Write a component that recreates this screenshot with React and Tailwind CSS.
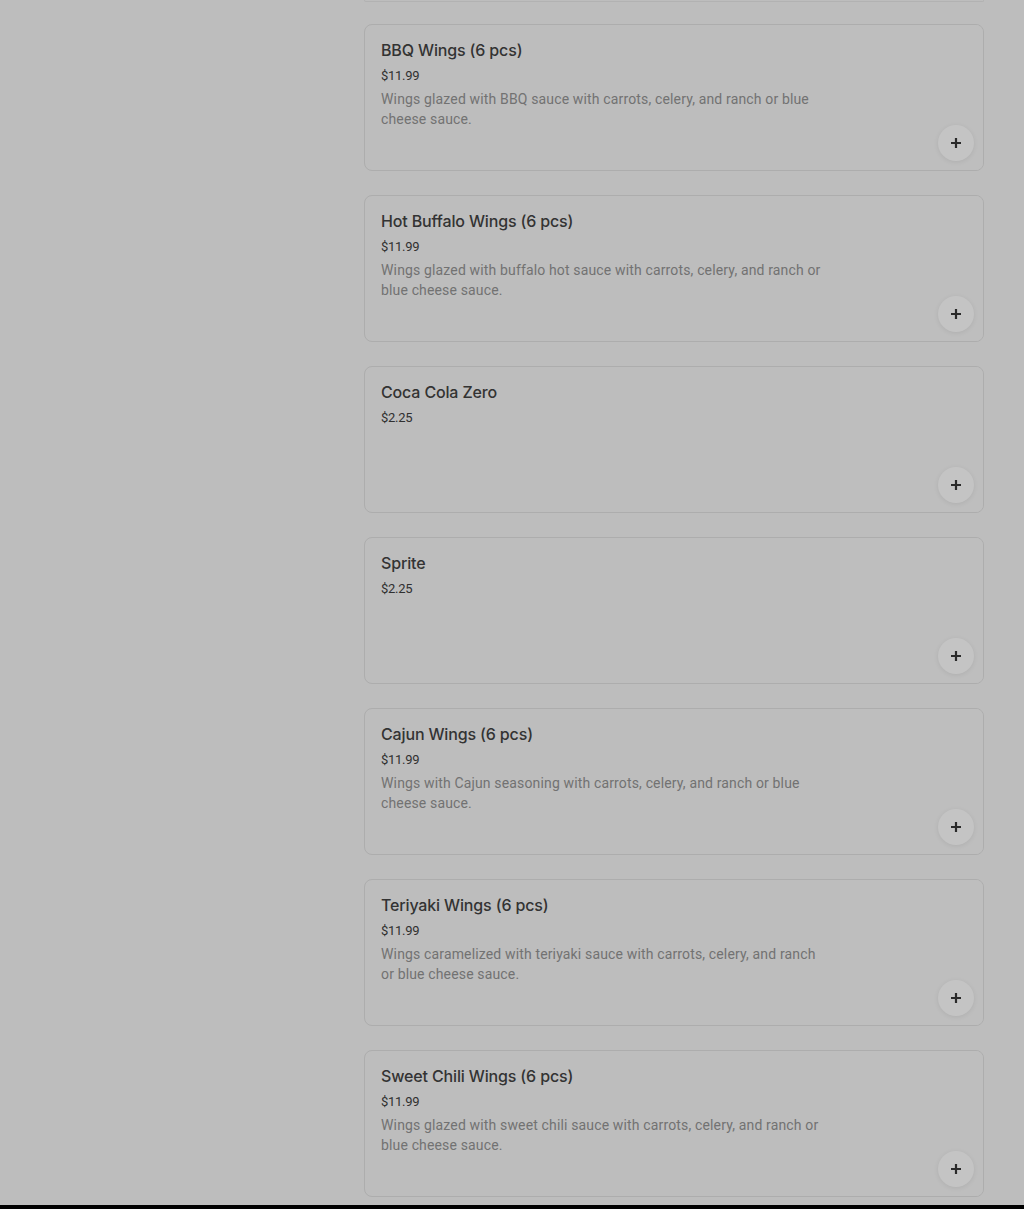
import React from 'react';

const items = [
  {
    name: 'BBQ Wings (6 pcs)',
    price: '$11.99',
    desc: 'Wings glazed with BBQ sauce with carrots, celery, and ranch or blue cheese sauce.',
  },
  {
    name: 'Hot Buffalo Wings (6 pcs)',
    price: '$11.99',
    desc: 'Wings glazed with buffalo hot sauce with carrots, celery, and ranch or blue cheese sauce.',
  },
  { name: 'Coca Cola Zero', price: '$2.25' },
  { name: 'Sprite', price: '$2.25' },
  {
    name: 'Cajun Wings (6 pcs)',
    price: '$11.99',
    desc: 'Wings with Cajun seasoning with carrots, celery, and ranch or blue cheese sauce.',
  },
  {
    name: 'Teriyaki Wings (6 pcs)',
    price: '$11.99',
    desc: 'Wings caramelized with teriyaki sauce with carrots, celery, and ranch or blue cheese sauce.',
  },
  {
    name: 'Sweet Chili Wings (6 pcs)',
    price: '$11.99',
    desc: 'Wings glazed with sweet chili sauce with carrots, celery, and ranch or blue cheese sauce.',
  },
];

const PlusIcon = () => (
  <svg width="12" height="12" viewBox="0 0 12 12" fill="none">
    <path d="M6 1v10M1 6h10" stroke="#2a2a2a" strokeWidth="2.2" />
  </svg>
);

const MenuCard = ({ item }) => (
  <div className="flex h-[147px] shrink-0 rounded-lg border border-[#adadad] bg-[#bdbdbd] overflow-hidden">
    <div className="flex-1 pl-4 pt-[15px]">
      <h3
        className="text-[16px] leading-5 font-medium text-[#333333] tracking-[-0.15px]"
        style={{ fontFamily: 'Inter, Roboto, sans-serif' }}
      >
        {item.name}
      </h3>
      <p className="mt-[6px] text-[13px] leading-5 text-[#303030] tracking-[-0.3px]">{item.price}</p>
      {item.desc && (
        <p className="mt-[3px] max-w-[446px] text-[14px] leading-5 text-[#727272] tracking-[0.15px]">
          {item.desc}
        </p>
      )}
    </div>
    <div className="relative w-[143px] bg-[#bebebe]">
      <button className="absolute right-[9px] bottom-[9px] flex h-9 w-9 items-center justify-center rounded-full bg-[#c4c4c4] shadow-[0_1px_5px_rgba(0,0,0,0.08)]">
        <PlusIcon />
      </button>
    </div>
  </div>
);

export default function App() {
  return (
    <div
      className="flex h-[1209px] flex-col bg-[#bdbdbd] overflow-hidden"
      style={{ fontFamily: 'Roboto, "Liberation Sans", sans-serif' }}
    >
      <div className="flex flex-1 flex-col pl-[364px] pr-10 overflow-hidden">
        <div className="h-[2px] shrink-0 rounded-b-lg border border-t-0 border-[#b2b2b2]" />
        <div className="mt-[22px] flex flex-col gap-6">
          {items.map((item) => (
            <MenuCard key={item.name} item={item} />
          ))}
        </div>
      </div>
      <div className="h-1 bg-black" />
    </div>
  );
}
